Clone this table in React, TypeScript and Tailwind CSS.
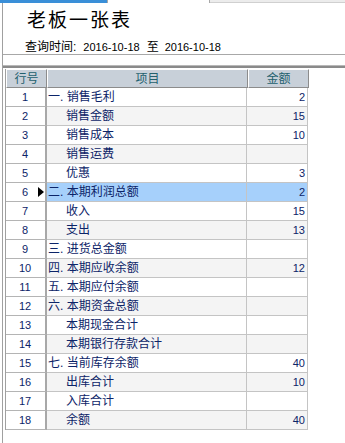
import React from "react";

type Row = { n: number; label: string; prefix?: string; sub?: boolean; amt?: string; sel?: boolean };

const rows: Row[] = [
  { n: 1, prefix: "一", label: "销售毛利", amt: "2" },
  { n: 2, sub: true, label: "销售金额", amt: "15" },
  { n: 3, sub: true, label: "销售成本", amt: "10" },
  { n: 4, sub: true, label: "销售运费" },
  { n: 5, sub: true, label: "优惠", amt: "3" },
  { n: 6, prefix: "二", label: "本期利润总额", amt: "2", sel: true },
  { n: 7, sub: true, label: "收入", amt: "15" },
  { n: 8, sub: true, label: "支出", amt: "13" },
  { n: 9, prefix: "三", label: "进货总金额" },
  { n: 10, prefix: "四", label: "本期应收余额", amt: "12" },
  { n: 11, prefix: "五", label: "本期应付余额" },
  { n: 12, prefix: "六", label: "本期资金总额" },
  { n: 13, sub: true, label: "本期现金合计" },
  { n: 14, sub: true, label: "本期银行存款合计" },
  { n: 15, prefix: "七", label: "当前库存余额", amt: "40" },
  { n: 16, sub: true, label: "出库合计", amt: "10" },
  { n: 17, sub: true, label: "入库合计" },
  { n: 18, sub: true, label: "余额", amt: "40" },
];

const cjk = "font-['Liberation_Sans','Noto_Sans_CJK_SC',sans-serif]";

export default function App() {
  return (
    <div className={`w-[345px] h-[443px] bg-white overflow-hidden ${cjk}`}>
      <div className="flex h-[3px]">
        <div className="w-[107px] bg-[#3a8fd8]" />
        <div className="w-[103px] border-l border-r border-[#a8a8a8] bg-white" />
        <div className="flex-1 bg-[#ececec] border-b border-[#d0d0d0]" />
      </div>
      <div className="pl-[2px] h-[440px]">
        <div className="h-full border-l border-[#a0a0a0] flex flex-col">
          <div className="h-[52px] border-b border-[#a8a8a8]">
            <div className="pl-[24px] pt-[7px] text-[19px] leading-[22px] tracking-[2px] text-black">老板一张表</div>
            <div className="pl-[22px] pt-[8px] text-[12px] leading-[14px] text-black flex items-center">
              <span>查询时间:</span>
              <span className="ml-[7px] text-[11px]">2016-10-18</span>
              <span className="ml-[7px]">至</span>
              <span className="ml-[6px] text-[11px]">2016-10-18</span>
            </div>
          </div>
          <div className="h-[10px]" />
          <div className="border-t border-[#b8b8b8] h-[1px]" />
          <div className="border-t-2 border-[#8a8a8a]" />
          <div className="pl-[2px] pt-[1px]">
            <div className="w-[304px] border-l border-[#a0a0a0]">
              <div className="flex h-[19px] text-[12px] text-[#23606e]">
                <div className="w-[41px] bg-[#c8d0d9] border-t border-l border-white border-r border-b border-r-[#8c8c8c] border-b-[#8c8c8c] flex items-center justify-center">行号</div>
                <div className="w-[201px] bg-[#c8d0d9] border-t border-l border-white border-r border-b border-r-[#8c8c8c] border-b-[#8c8c8c] flex items-center justify-center">项目</div>
                <div className="w-[61px] bg-[#c8d0d9] border-t border-l border-white border-r border-b border-r-[#8c8c8c] border-b-[#8c8c8c] flex items-center justify-center">金额</div>
              </div>
              {rows.map((r) => {
                const bg = r.sel ? "bg-[#a6d0fb]" : r.n % 2 === 0 ? "bg-[#f4f4f4]" : "bg-white";
                return (
                  <div key={r.n} className="flex h-[19px] text-[12px] text-[#0c2468]">
                    <div className="relative w-[41px] bg-white border-b border-[#b4b4b4] border-r-2 border-r-[#a8a8a8] flex items-center justify-center text-[11px] pr-[1px]">
                      {r.n}
                      {r.sel && (
                        <svg className="absolute left-[32px] top-[4px]" width="6" height="10" viewBox="0 0 6 10">
                          <path d="M0 0 L6 5 L0 10 Z" fill="#000" />
                        </svg>
                      )}
                    </div>
                    <div className={`w-[200px] ${bg} border-b border-r border-[#c4c4c4] flex items-center whitespace-nowrap ${r.sub ? "pl-[19px]" : "pl-[1px]"}`}>
                      {r.prefix ? `${r.prefix}. ` : ""}
                      {r.label}
                    </div>
                    <div className={`w-[61px] ${bg} border-b border-r border-[#c4c4c4] flex items-center justify-end pr-[2px] text-[11px]`}>
                      {r.amt ?? ""}
                    </div>
                  </div>
                );
              })}
            </div>
          </div>
        </div>
      </div>
    </div>
  );
}
